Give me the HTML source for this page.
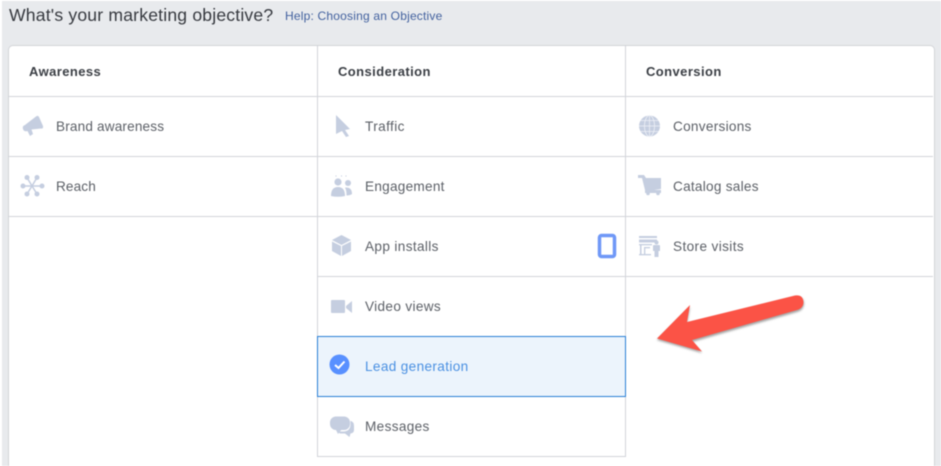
<!DOCTYPE html>
<html><head><meta charset="utf-8">
<style>
html,body{margin:0;padding:0;background:#fff;}
#r{position:relative;width:941px;height:466px;overflow:hidden;background:#fff;font-family:"Liberation Sans",sans-serif;filter:blur(.4px);}
#g{position:absolute;left:2px;top:1px;width:939px;height:465px;background:#e8eaed;}
#c{position:absolute;left:8.5px;top:45.5px;width:925px;height:425px;background:#fff;border-radius:4px 4px 0 0;box-shadow:0 0 0 1px #d2d4d8;}
.l{position:absolute;background:#d3d5d9;}
.t{position:absolute;font-size:13.6px;line-height:16px;color:#5c6067;white-space:nowrap;letter-spacing:.28px;}
.h{position:absolute;font-size:13px;line-height:16px;font-weight:bold;color:#3a3e44;white-space:nowrap;letter-spacing:.42px;top:63.5px;}
svg{position:absolute;overflow:visible;}
</style></head><body>
<div id="r">
<div id="g"></div>
<div id="c"></div>
<div style="position:absolute;left:9px;top:4px;font-size:17.6px;line-height:22px;color:#36393f;white-space:nowrap;letter-spacing:.18px;">What's your marketing objective?</div>
<div style="position:absolute;left:285px;top:9px;font-size:12px;line-height:15px;color:#41609e;white-space:nowrap;letter-spacing:.2px;">Help: Choosing an Objective</div>

<div class="l" style="left:9px;top:96px;width:924px;height:1px"></div>
<div class="l" style="left:9px;top:156px;width:924px;height:1px"></div>
<div class="l" style="left:9px;top:216px;width:924px;height:1px"></div>
<div class="l" style="left:317px;top:276px;width:616px;height:1px"></div>
<div class="l" style="left:317px;top:456px;width:309px;height:1px"></div>
<div class="l" style="left:317px;top:46px;width:1px;height:411px"></div>
<div class="l" style="left:625px;top:46px;width:1px;height:411px"></div>
<div style="position:absolute;left:317px;top:336px;width:307px;height:59px;background:#ecf4fc;border:1px solid #2a7fd6;"></div>

<div class="h" style="left:29px">Awareness</div>
<div class="h" style="left:338px">Consideration</div>
<div class="h" style="left:646px">Conversion</div>

<div class="t" style="left:56px;top:119px;letter-spacing:.16px">Brand awareness</div>
<div class="t" style="left:56px;top:179px;letter-spacing:.12px">Reach</div>
<div class="t" style="left:365px;top:119px;letter-spacing:.4px">Traffic</div>
<div class="t" style="left:365px;top:179px;letter-spacing:.26px">Engagement</div>
<div class="t" style="left:365px;top:239px;letter-spacing:.36px">App installs</div>
<div class="t" style="left:365px;top:299px;letter-spacing:.34px">Video views</div>
<div class="t" style="left:365px;top:359px;letter-spacing:.35px;color:#4a90e2">Lead generation</div>
<div class="t" style="left:365px;top:419px;letter-spacing:.34px">Messages</div>
<div class="t" style="left:673px;top:119px;letter-spacing:.28px">Conversions</div>
<div class="t" style="left:673px;top:179px;letter-spacing:.26px">Catalog sales</div>
<div class="t" style="left:673px;top:239px;letter-spacing:.38px">Store visits</div>

<svg style="left:0;top:0" width="941" height="466" fill="#c5cee0">
<!-- megaphone -->
<path d="M23 129 Q22 126 25 125 L36 116.500 Q38 115 39 117 L43 126 Q43.500 129 41 128.500 L31.500 129.500 L33 134 L30 136 L27.500 131 Q24 132 23 129Z"/>
<!-- reach -->
<g stroke="#c5cee0" stroke-width="1.5"><path d="M32 186 L27 177.500 M32 186 L37 177.500 M32 186 L23 186 M32 186 L42 186 M32 186 L27 194 M32 186 L37 194"/></g>
<circle cx="27" cy="177.500" r="2.500"/><circle cx="37" cy="177.500" r="2.500"/><circle cx="23" cy="186" r="2.500"/><circle cx="42" cy="186" r="2.500"/><circle cx="27" cy="194" r="2.500"/><circle cx="37" cy="194" r="2.500"/>
<!-- cursor -->
<path d="M336 115 L350 129 L345 130 L349 136 L346 137 L342 131 L336 134Z"/>
<!-- engagement -->
<circle cx="338" cy="182" r="3.600"/><circle cx="348" cy="183" r="3"/>
<path d="M331 196 Q331 187 338 187 Q345 187 345 196Q338 197.500 331 196Z"/><path d="M346 187.500 Q352 187.500 352 194 Q350 195.500 346.500 195.500 Q346.500 190 345 187.500Z"/>
<circle cx="336" cy="176" r=".6"/><circle cx="341.500" cy="176" r=".6"/><circle cx="346" cy="176" r=".6"/>
<!-- box -->
<path d="M341.500 235 L351 240 L341.500 245 L332 240Z"/><path d="M332 241.500 L341 246 L341 256 L332 251Z"/><path d="M351 241.500 L342 246 L342 256 L351 251Z"/>
<!-- video -->
<rect x="331" y="300" width="14" height="13" rx="1"/><path d="M346 306 L352 301 L352 313 L346 308Z"/>
<!-- messages -->
<path d="M350.500 421 H351 Q354 422 354 426 V430 Q354 433 350.500 433.500 L349.500 437 L345 433.500 H340 L337 431.500 H344 Q350 431 350.500 425Z"/>
<rect x="330" y="416.500" width="20" height="13.500" rx="6"/><path d="M335 428 L338 434 L342 429Z"/>
<!-- globe -->
<circle cx="649.500" cy="126" r="10.500"/>
<g fill="none" stroke="#eef1f7" stroke-width=".8"><ellipse cx="649.500" cy="126" rx="5" ry="10.500"/><path d="M649.500 115.500V136.500M639 126H660M640.500 120.500H658.500M640.500 131.500H658.500"/></g>
<!-- cart -->
<path d="M638 175 H644 L646 178 H661 V189 L647 191 L645 190 L642 178 L638 178Z"/><rect x="645" y="190" width="16" height="3"/><circle cx="648" cy="193.500" r="1.800"/><circle cx="658" cy="193.500" r="1.800"/>
<!-- store -->
<g><rect x="639" y="236" width="18" height="2"/><rect x="639" y="239.500" width="18" height="3"/><rect x="639" y="244" width="13" height="1.300"/><rect x="640" y="245" width="1.500" height="9"/><rect x="644" y="247" width="1.300" height="7"/><path d="M645 247H650V248.300H645Z"/><rect x="639" y="254" width="12" height="1.300"/><circle cx="656.500" cy="242.500" r="2"/><path d="M653 246 Q653 245 654 245 H659 Q660 245 660 246 V251 H658.500 V257 H654.500 V251 H653Z"/></g>
<!-- phone highlight -->
<rect x="599.500" y="235.500" width="15" height="21" rx="2" fill="#fff" stroke="#6f98f7" stroke-width="3.500"/>
<!-- check -->
<circle cx="339.500" cy="364.500" r="10" fill="#5890ff"/>
<path d="M335 365 L338.500 368 L344.500 361.500" fill="none" stroke="#fff" stroke-width="2"/>
<!-- arrow -->
<path d="M657 340 L690 307 L687 324 L795 297 Q803 296 804 303 Q804 310 797 312 L692 342 L702 353Z" fill="#555" opacity=".55" style="filter:blur(1px)"/>
<path d="M657 338.500 L690 305 L687 322 L795 295.500 Q803 294.500 803.500 302 Q803.500 308 797 310 L692 340 L702 351.500Z" fill="#fb5346"/>
</svg>
</div>
</body></html>
